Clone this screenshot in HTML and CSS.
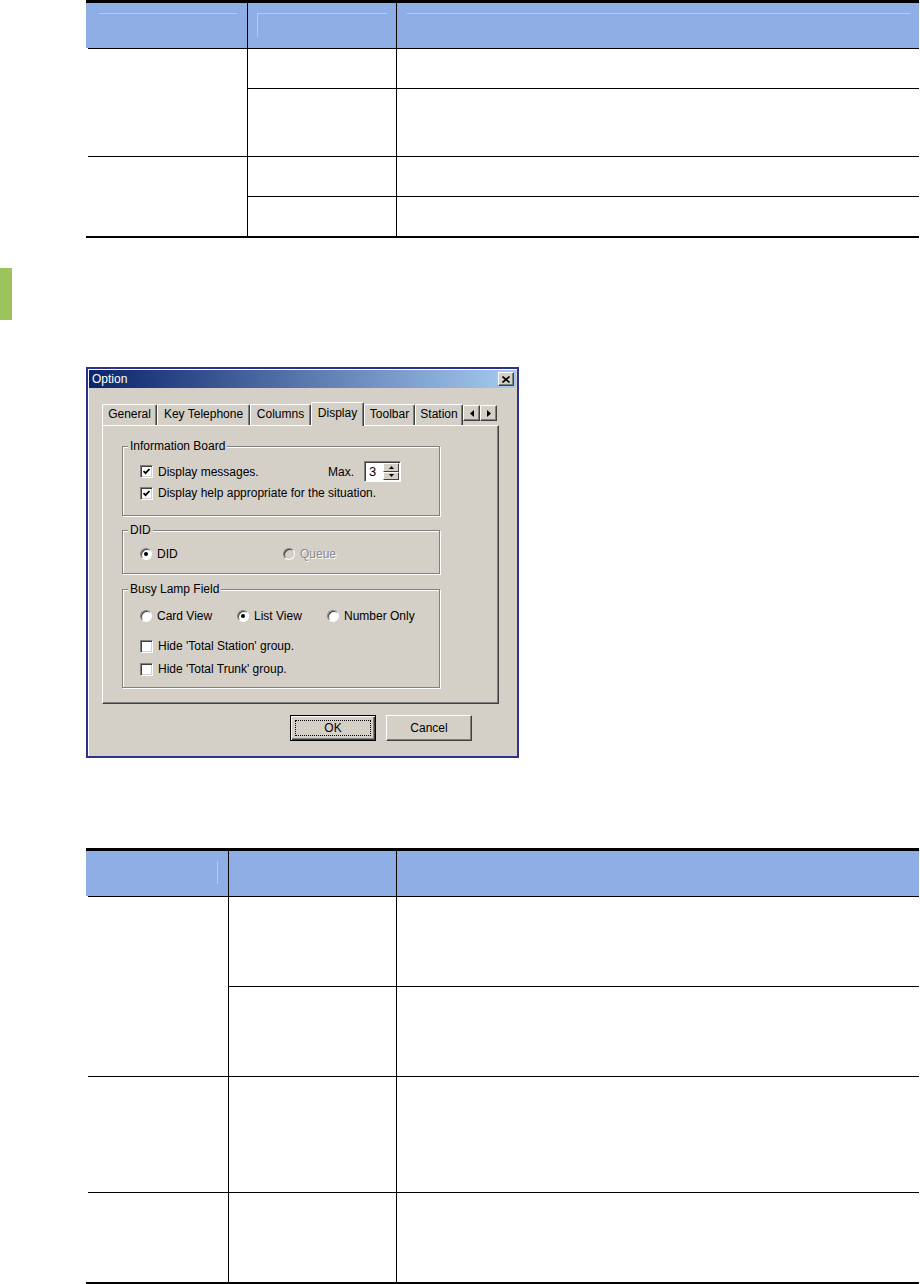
FILE: index.html
```html
<!DOCTYPE html>
<html lang="en">
<head>
	<meta charset="UTF-8">
	<title>Option - Display</title>
	<link rel="stylesheet" href="styles.css">
</head>
<body>
	<!-- first table: header + 2 grouped rows -->
	<div class="grid-table t1">
		<div class="th"><div class="hl hl-a"></div></div>
		<div class="th col"><div class="hl hl-b"></div></div>
		<div class="th col"><div class="hl hl-c"></div></div>

		<div class="td first span2"></div>
		<div class="td col"></div>
		<div class="td col"></div>
		<div class="td col"></div>
		<div class="td col"></div>

		<div class="td first span2"></div>
		<div class="td col"></div>
		<div class="td col"></div>
		<div class="td col"></div>
		<div class="td col"></div>
	</div>

	<div class="side-mark"></div>

	<!-- Option dialog -->
	<div class="dialog">
		<div class="titlebar">
			<span class="title">Option</span>
			<span class="close-btn">
				<svg width="8" height="7" viewBox="0 0 8 7"><path d="M0.5 0.5 L7.5 6.5 M7.5 0.5 L0.5 6.5" stroke="#000" stroke-width="1.6" fill="none"/></svg>
			</span>
		</div>

		<div class="tabs">
			<span class="tab" style="width:55px">General</span>
			<span class="tab" style="width:93px">Key Telephone</span>
			<span class="tab" style="width:61px">Columns</span>
			<span class="tab active" style="width:53px">Display</span>
			<span class="tab" style="width:51px">Toolbar</span>
			<span class="tab" style="width:48px">Station</span>
			<span class="scroll-btns">
				<span class="arrow-btn"><svg width="4" height="7" viewBox="0 0 4 7"><polygon points="4,0 4,7 0,3.5" fill="#000"/></svg></span>
				<span class="arrow-btn"><svg width="4" height="7" viewBox="0 0 4 7"><polygon points="0,0 0,7 4,3.5" fill="#000"/></svg></span>
			</span>
		</div>

		<div class="panel">
			<div class="group g-info">
				<div class="legend">Information Board</div>
				<div class="row row-first">
					<span class="check on"><svg width="7" height="7" viewBox="0 0 7 7"><polyline points="0.5,3 2.5,5.2 6.5,1" stroke="#000" stroke-width="1.8" fill="none"/></svg></span>
					<span>Display messages.</span>
					<span class="max">Max.</span>
					<span class="spinner">
						<span class="spin-val">3</span>
						<span class="spin-btns">
							<span class="spin-btn"><svg width="5" height="3" viewBox="0 0 5 3"><polygon points="0,3 5,3 2.5,0" fill="#000"/></svg></span>
							<span class="spin-btn"><svg width="5" height="3" viewBox="0 0 5 3"><polygon points="0,0 5,0 2.5,3" fill="#000"/></svg></span>
						</span>
					</span>
				</div>
				<div class="row row-second">
					<span class="check on"><svg width="7" height="7" viewBox="0 0 7 7"><polyline points="0.5,3 2.5,5.2 6.5,1" stroke="#000" stroke-width="1.8" fill="none"/></svg></span>
					<span>Display help appropriate for the situation.</span>
				</div>
			</div>

			<div class="group g-did">
				<div class="legend">DID</div>
				<div class="row row-did">
					<span class="opt" style="width:143px"><span class="radio"><span class="dot"></span></span>DID</span>
					<span class="opt disabled"><span class="radio"></span>Queue</span>
				</div>
			</div>

			<div class="group g-blf">
				<div class="legend">Busy Lamp Field</div>
				<div class="row row-views">
					<span class="opt" style="width:97px"><span class="radio"></span>Card View</span>
					<span class="opt" style="width:90px"><span class="radio"><span class="dot"></span></span>List View</span>
					<span class="opt"><span class="radio"></span>Number Only</span>
				</div>
				<div class="row row-hide1">
					<span class="check"></span>
					<span>Hide 'Total Station' group.</span>
				</div>
				<div class="row row-hide2">
					<span class="check"></span>
					<span>Hide 'Total Trunk' group.</span>
				</div>
			</div>
		</div>

		<div class="buttons">
			<button class="btn default"><span class="focus">OK</span></button>
			<button class="btn">Cancel</button>
		</div>
	</div>

	<!-- second table -->
	<div class="grid-table t2">
		<div class="th"><div class="hl hl-d"></div></div>
		<div class="th col"></div>
		<div class="th col"></div>

		<div class="td first span2"></div>
		<div class="td col"></div>
		<div class="td col"></div>
		<div class="td col"></div>
		<div class="td col"></div>

		<div class="td first"></div>
		<div class="td col"></div>
		<div class="td col"></div>

		<div class="td first"></div>
		<div class="td col"></div>
		<div class="td col"></div>
	</div>
</body>
</html>
```

FILE: styles.css
```css
*{
	margin: 0;
	padding: 0;
	box-sizing: border-box;
}
body{
	background: #fff;
	font-family: "Liberation Sans", Arial, sans-serif;
	font-size: 12px;
	color: #000;
}

/* ---- tables ---- */
.grid-table{
	display: grid;
	width: 833px;
	margin-left: 86px;
	border-top: 3px solid #000;
	border-bottom: 2px solid #000;
}
.t1{
	grid-template-columns: 161px 149px 1fr;
	grid-template-rows: 45px 40px 68px 40px 40px;
}
.t2{
	margin-top: 90px;
	grid-template-columns: 142px 168px 1fr;
	grid-template-rows: 45px 90px 90px 116px 90px;
}
.th{
	background: #8faee6;
}
.col{
	border-left: 1px solid #000;
}
.td{
	border-top: 1px solid #000;
}
.td.first{
	margin-left: 2px;
}
.span2{
	grid-row: span 2;
}
.hl{
	margin-top: 10px;
	border-top: 1px solid #b7cbf1;
}
.hl-a{
	margin-left: 13px;
	margin-right: 10px;
}
.hl-b{
	height: 24px;
	margin-left: 9px;
	margin-right: 9px;
	border-left: 1px solid #b7cbf1;
}
.hl-c{
	margin-left: 10px;
	margin-right: 9px;
}
.hl-d{
	width: 1px;
	height: 23px;
	margin-left: 131px;
	border-top: 0;
	border-left: 1px solid #b7cbf1;
}

.side-mark{
	width: 12px;
	height: 52px;
	margin-top: 30px;
	background: #9cc35c;
}

/* ---- dialog ---- */
.dialog{
	width: 433px;
	height: 391px;
	margin: 47px 0 0 86px;
	border: 2px solid #2f318f;
	background: #d4d0c8;
	box-shadow: inset 1px 1px #fff;
}
.titlebar{
	display: flex;
	align-items: center;
	justify-content: space-between;
	height: 18px;
	margin: 1px 1px 0;
	padding: 0 2px 0 3px;
	background: linear-gradient(to right, #0a246a, #a6caf0);
	color: #fff;
}
.close-btn{
	display: flex;
	align-items: center;
	justify-content: center;
	width: 16px;
	height: 14px;
	background: #d4d0c8;
	border: 1px solid;
	border-color: #fff #404040 #404040 #fff;
	box-shadow: inset -1px -1px #808080;
}

.tabs{
	display: flex;
	align-items: flex-end;
	height: 23px;
	margin: 14px 0 0 14px;
}
.tab{
	height: 21px;
	line-height: 19px;
	text-align: center;
	white-space: nowrap;
	overflow: hidden;
	border: 1px solid;
	border-bottom: 0;
	border-color: #fff #404040 #fff #fff;
	border-radius: 2px 2px 0 0;
	box-shadow: inset -1px 0 #808080;
}
.tab.active{
	position: relative;
	z-index: 1;
	height: 24px;
	margin-bottom: -1px;
	line-height: 20px;
	background: #d4d0c8;
}
.scroll-btns{
	display: flex;
	align-self: flex-start;
	margin-top: 3px;
}
.arrow-btn{
	display: flex;
	align-items: center;
	justify-content: center;
	width: 17px;
	height: 16px;
	background: #d4d0c8;
	border: 1px solid;
	border-color: #fff #404040 #404040 #fff;
	box-shadow: inset -1px -1px #808080;
}

.panel{
	width: 397px;
	height: 279px;
	margin-left: 14px;
	padding: 20px 0 0 19px;
	border: 1px solid;
	border-color: #fff #404040 #404040 #fff;
	box-shadow: inset -1px -1px #808080;
}
.group{
	width: 318px;
	border: 1px solid #808080;
	box-shadow: inset 1px 1px #fff, 1px 1px #fff;
}
.g-info{
	height: 70px;
}
.g-did{
	height: 44px;
	margin-top: 14px;
}
.g-blf{
	height: 99px;
	margin-top: 15px;
}
.legend{
	display: table;
	margin: -8px 0 0 5px;
	padding: 0 2px;
	line-height: 14px;
	background: #d4d0c8;
}
.row{
	display: flex;
	align-items: center;
	height: 16px;
	padding-left: 17px;
	white-space: nowrap;
}
.row-first{
	height: 21px;
	margin-top: 8px;
	padding-right: 38px;
}
.row-second{
	margin-top: 3px;
}
.row-did{
	margin-top: 9px;
}
.row-views{
	margin-top: 12px;
}
.row-hide1{
	margin-top: 14px;
}
.row-hide2{
	margin-top: 7px;
}

.check{
	display: flex;
	align-items: center;
	justify-content: center;
	flex: none;
	width: 13px;
	height: 13px;
	margin-right: 5px;
	background: #fff;
	border: 1px solid;
	border-color: #808080 #fff #fff #808080;
	box-shadow: inset 1px 1px #404040, inset -1px -1px #d4d0c8;
}
.max{
	margin-left: auto;
}
.spinner{
	display: flex;
	width: 37px;
	height: 21px;
	margin-left: 10px;
	border: 1px solid;
	border-color: #808080 #fff #fff #808080;
	box-shadow: inset 1px 1px #404040;
	background: #fff;
	padding: 1px 1px 1px 1px;
}
.spin-val{
	flex: 1;
	padding: 1px 0 0 3px;
	line-height: 16px;
	font-size: 13px;
}
.spin-btns{
	display: flex;
	flex-direction: column;
	width: 16px;
}
.spin-btn{
	display: flex;
	align-items: center;
	justify-content: center;
	flex: 1;
	background: #d4d0c8;
	border: 1px solid;
	border-color: #fff #404040 #404040 #fff;
}

.opt{
	display: flex;
	align-items: center;
}
.radio{
	display: flex;
	align-items: center;
	justify-content: center;
	flex: none;
	width: 12px;
	height: 12px;
	margin-right: 5px;
	border-radius: 50%;
	background: #fff;
	border: 1px solid;
	border-color: #808080 #fff #fff #808080;
	box-shadow: inset 1px 1px #404040;
}
.dot{
	width: 4px;
	height: 4px;
	border-radius: 50%;
	background: #000;
}
.disabled{
	color: #8a8a8a;
	text-shadow: 1px 1px #fff;
}
.disabled .radio{
	background: #d4d0c8;
}

.buttons{
	display: flex;
	gap: 10px;
	margin: 11px 0 0 202px;
}
.btn{
	display: flex;
	align-items: center;
	justify-content: center;
	width: 86px;
	height: 26px;
	font-family: "Liberation Sans", Arial, sans-serif;
	font-size: 12px;
	color: #000;
	background: #d4d0c8;
	border: 1px solid;
	border-color: #fff #404040 #404040 #fff;
	box-shadow: inset -1px -1px #808080;
}
.btn.default{
	border: 1px solid #000;
	box-shadow: inset 1px 1px #fff, inset -1px -1px #404040, inset -2px -2px #808080;
}
.focus{
	display: flex;
	align-items: center;
	justify-content: center;
	width: 76px;
	height: 16px;
	border: 1px dotted #000;
}
```
